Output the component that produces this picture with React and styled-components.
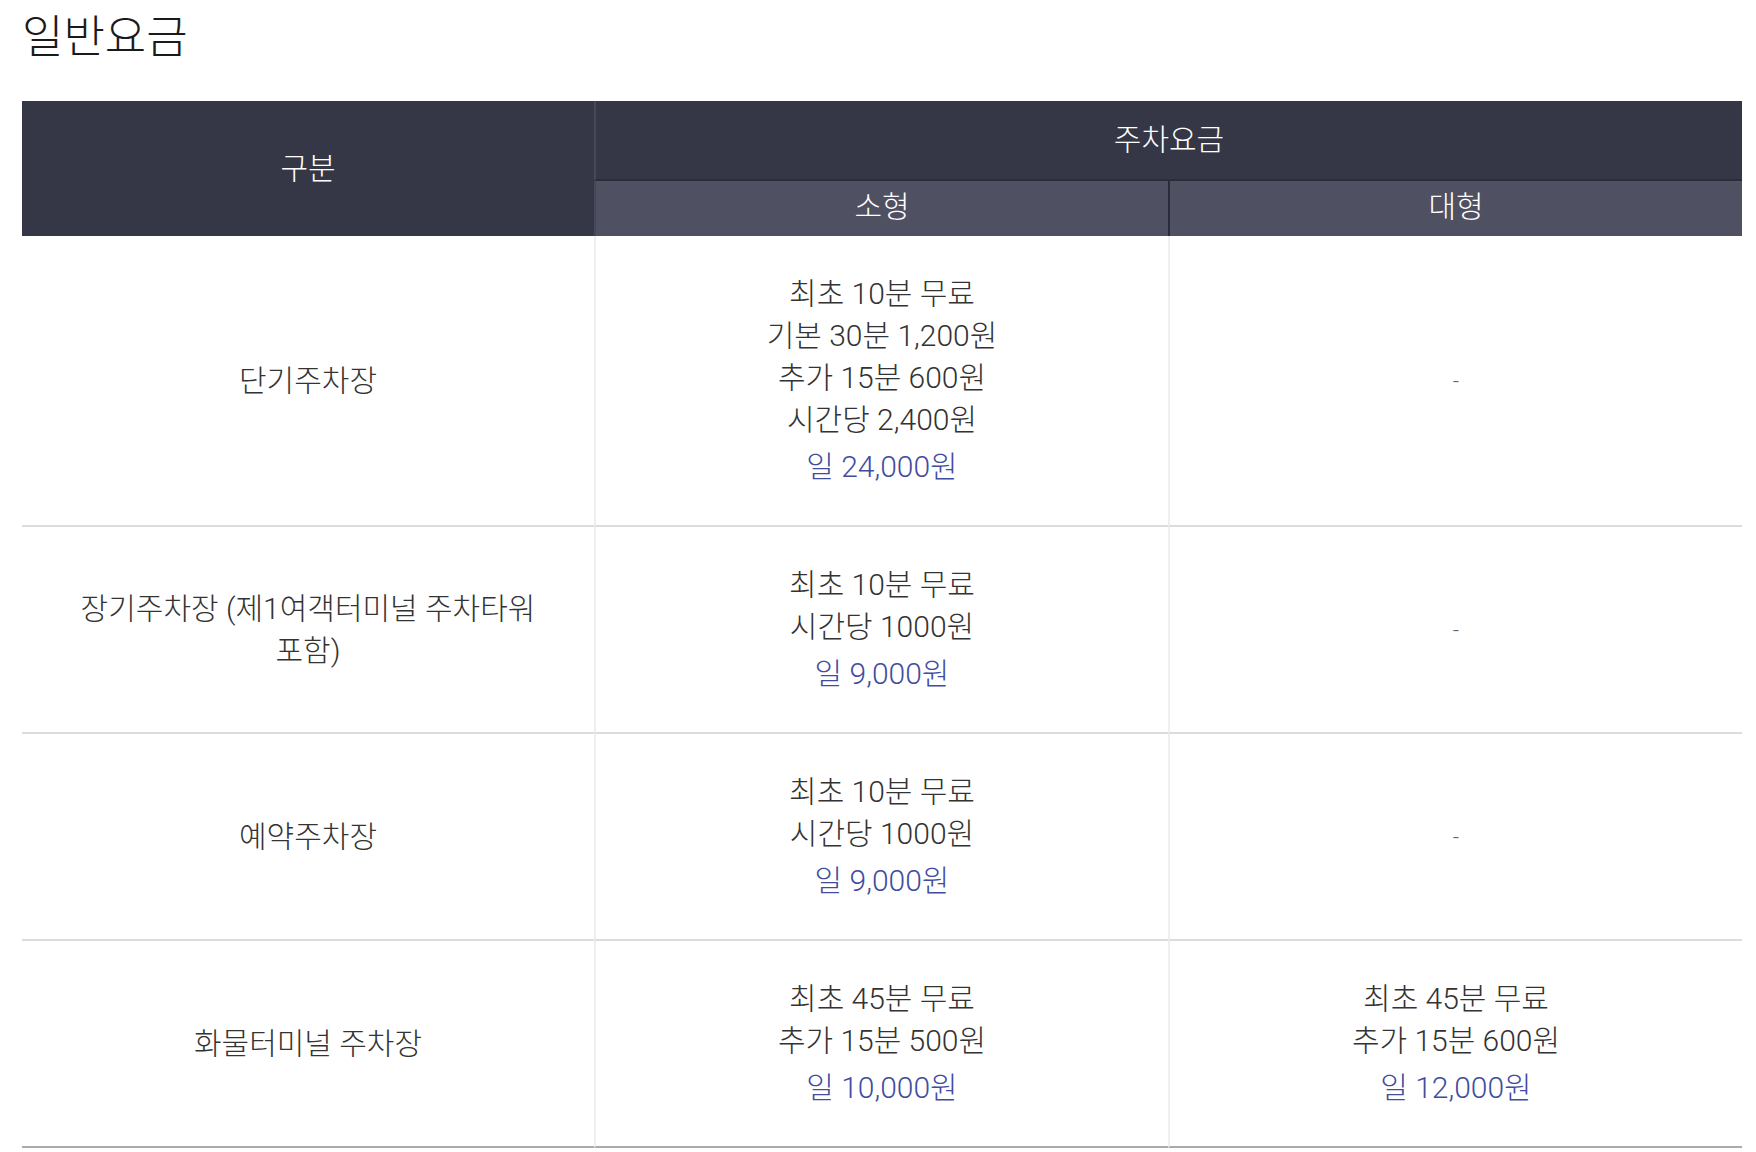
import React from "react";
import styled, { createGlobalStyle } from "styled-components";

const Global = createGlobalStyle`
  html, body { margin: 0; padding: 0; background: #fff; }
  body {
    font-family: Roboto, "Noto Sans CJK KR", "Noto Sans", sans-serif;
    color: #333;
  }
`;

const Page = styled.div`
  padding: 8px 14px 0 22px;
`;

const Title = styled.h2`
  margin: 0 0 33px;
  font-size: 45px;
  line-height: 60px;
  font-weight: 300;
  color: #1a1a1a;
`;

const Table = styled.table`
  width: 1720px;
  table-layout: fixed;
  border-collapse: separate;
  border-spacing: 0;
  font-size: 30px;
  font-weight: 300;
  word-break: keep-all;
`;

const HeadCell = styled.th`
  padding: 0 0 ${(p) => (p.$sub ? 4 : 0)}px;
  font-weight: 300;
  color: #fff;
  text-align: center;
  vertical-align: middle;
  line-height: 42px;
  background: ${(p) => (p.$sub ? "#4f5062" : "#353746")};
  height: ${(p) => p.$h}px;
  border-left: ${(p) => (p.$divider ? `2px solid ${p.$divider}` : "none")};
  border-bottom: ${(p) => (p.$underline ? "2px solid #2b2c3a" : "none")};
`;

const Cell = styled.td`
  padding: 37px 40px;
  text-align: center;
  vertical-align: middle;
  line-height: 42px;
  color: #333;
  border-left: ${(p) => (p.$first ? "none" : "2px solid #efeff3")};
  border-bottom: 2px solid ${(p) => (p.$last ? "#a9a9ae" : "#dcdcdc")};
`;

const Line = styled.div``;

const Daily = styled.div`
  margin-top: 5px;
  color: #414c9f;
`;

const Dash = styled.span`
  color: #666;
  font-size: 22px;
`;

const rows = [
  {
    name: "단기주차장",
    small: { lines: ["최초 10분 무료", "기본 30분 1,200원", "추가 15분 600원", "시간당 2,400원"], daily: "일 24,000원" },
    large: null,
  },
  {
    name: "장기주차장 (제1여객터미널 주차타워 포함)",
    small: { lines: ["최초 10분 무료", "시간당 1000원"], daily: "일 9,000원" },
    large: null,
  },
  {
    name: "예약주차장",
    small: { lines: ["최초 10분 무료", "시간당 1000원"], daily: "일 9,000원" },
    large: null,
  },
  {
    name: "화물터미널 주차장",
    small: { lines: ["최초 45분 무료", "추가 15분 500원"], daily: "일 10,000원" },
    large: { lines: ["최초 45분 무료", "추가 15분 600원"], daily: "일 12,000원" },
  },
];

function Fee({ data }) {
  if (!data) return <Dash>-</Dash>;
  return (
    <>
      {data.lines.map((l) => (
        <Line key={l}>{l}</Line>
      ))}
      <Daily>{data.daily}</Daily>
    </>
  );
}

export default function App() {
  return (
    <>
      <Global />
      <Page>
        <Title>일반요금</Title>
        <Table>
          <colgroup>
            <col style={{ width: 572 }} />
            <col style={{ width: 574 }} />
            <col style={{ width: 574 }} />
          </colgroup>
          <thead>
            <tr>
              <HeadCell rowSpan={2} $h={135}>구분</HeadCell>
              <HeadCell colSpan={2} $h={78} $divider="#464858" $underline>
                주차요금
              </HeadCell>
            </tr>
            <tr>
              <HeadCell $sub $h={51} $divider="#464858">소형</HeadCell>
              <HeadCell $sub $h={51} $divider="#2b2c3a">대형</HeadCell>
            </tr>
          </thead>
          <tbody>
            {rows.map((r, i) => {
              const last = i === rows.length - 1;
              return (
                <tr key={r.name}>
                  <Cell $first $last={last}>{r.name}</Cell>
                  <Cell $last={last}>
                    <Fee data={r.small} />
                  </Cell>
                  <Cell $last={last}>
                    <Fee data={r.large} />
                  </Cell>
                </tr>
              );
            })}
          </tbody>
        </Table>
      </Page>
    </>
  );
}
